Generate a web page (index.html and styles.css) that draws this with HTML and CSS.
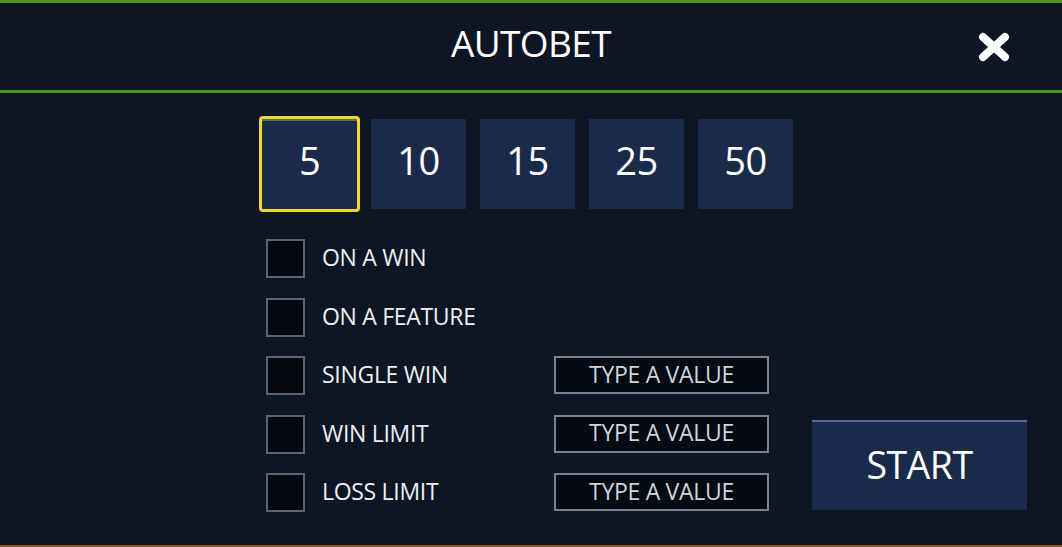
FILE: index.html
```html
<!DOCTYPE html>
<html lang="en">
<head>
<meta charset="utf-8">
<title>Autobet</title>
<link rel="stylesheet" href="styles.css">
</head>
<body>
<div class="app">
  <header class="header">
    <span class="spacer"></span>
    <h1 class="title">AUTOBET</h1>
    <button class="close" aria-label="Close">
      <svg width="32" height="30" viewBox="0 0 32 30"><path d="M5 5 L27 25 M27 5 L5 25" stroke="#fff" stroke-width="8" stroke-linecap="round" fill="none"/></svg>
    </button>
  </header>
  <main class="content">
    <div class="counts">
      <button class="count selected">5</button>
      <button class="count">10</button>
      <button class="count">15</button>
      <button class="count">25</button>
      <button class="count">50</button>
    </div>
    <div class="options">
      <span class="check r1"></span><span class="label r1">ON A WIN</span>
      <span class="check r2"></span><span class="label r2">ON A FEATURE</span>
      <span class="check r3"></span><span class="label r3">SINGLE WIN</span><span class="field r3">TYPE A VALUE</span>
      <span class="check r4"></span><span class="label r4">WIN LIMIT</span><span class="field r4">TYPE A VALUE</span>
      <span class="check r5"></span><span class="label r5">LOSS LIMIT</span><span class="field r5">TYPE A VALUE</span>
      <button class="start">START</button>
    </div>
  </main>
</div>
</body>
</html>
```
FILE: styles.css
```css
html, body {
  margin: 0;
  padding: 0;
  height: 100%;
}
body {
  background: #0e1624;
  font-family: "Open Sans", "Noto Sans", sans-serif;
  color: #f2f2f2;
}
.app {
  box-sizing: border-box;
  min-height: 100vh;
  display: flex;
  flex-direction: column;
  border-top: 3px solid #4a951e;
  border-bottom: 2px solid #8a5a22;
}
.header {
  height: 87px;
  display: grid;
  grid-template-columns: 1fr auto 1fr;
  align-items: center;
  border-bottom: 3px solid #4a951e;
  background: #0f1523;
}
.title {
  margin: 0;
  font-weight: 400;
  font-size: 37px;
  letter-spacing: -0.6px;
  line-height: 1;
  color: #ffffff;
  padding-bottom: 8px;
}
.close {
  justify-self: end;
  margin-right: 52px;
  background: none;
  border: 0;
  padding: 0;
  width: 32px;
  height: 30px;
  display: block;
  cursor: pointer;
}
.close svg { display: block; }
.content {
  flex: 1;
  padding-left: 262px;
}
.counts {
  display: flex;
  gap: 14px;
  margin-top: 26px;
}
.count {
  width: 95px;
  height: 90px;
  border: 0;
  padding: 0;
  background: #1b2a48;
  color: #ffffff;
  font-family: "Open Sans", "Noto Sans", sans-serif;
  font-size: 38px;
  letter-spacing: -0.5px;
  line-height: 1;
  padding-bottom: 8px;
}
.count.selected {
  outline: 3px solid #ecdc1c;
  outline-offset: 0;
  border-radius: 1px;
  box-shadow: inset 0 2px 0 #5d6779;
}
.options {
  display: grid;
  grid-template-columns: 39px 215px 215px 215px;
  grid-template-rows: repeat(5, 39px);
  column-gap: 17px;
  row-gap: 19.5px;
  margin-top: 30px;
  margin-left: 4px;
}
.check {
  grid-column: 1;
  box-sizing: border-box;
  width: 39px;
  height: 39px;
  border: 2px solid #5c6372;
  background: #05080f;
}
.label {
  grid-column: 2;
  align-self: center;
  font-size: 23px;
  letter-spacing: -0.3px;
  color: #eceef0;
  white-space: nowrap;
  padding-bottom: 3px;
}
.field {
  grid-column: 3;
  box-sizing: border-box;
  width: 215px;
  height: 38px;
  border: 2px solid #7a808c;
  background: #060a12;
  color: #d0d3d8;
  font-size: 23px;
  letter-spacing: -0.3px;
  display: flex;
  align-items: center;
  justify-content: center;
  padding-bottom: 3px;
}
.r1 { grid-row: 1; }
.r2 { grid-row: 2; }
.r3 { grid-row: 3; }
.r4 { grid-row: 4; }
.r5 { grid-row: 5; }
.start {
  grid-column: 4;
  grid-row: 4 / span 2;
  align-self: center;
  margin-left: 26px;
  margin-top: 4px;
  width: 215px;
  height: 90px;
  border: 0;
  border-top: 2px solid #56678a;
  background: #1a2a4b;
  color: #ffffff;
  font-family: "Open Sans", "Noto Sans", sans-serif;
  font-size: 37.5px;
  letter-spacing: -0.5px;
  padding: 0 0 4px;
}
```
